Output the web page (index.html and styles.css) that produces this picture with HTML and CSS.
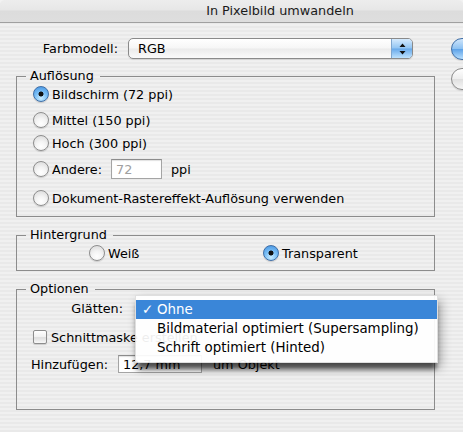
FILE: index.html
```html
<!DOCTYPE html>
<html lang="de">
<head>
<meta charset="utf-8">
<title>In Pixelbild umwandeln</title>
<link rel="stylesheet" href="styles.css">
</head>
<body>
<div class="window">
  <div class="titlebar">In Pixelbild umwandeln</div>
  <div class="content">
    <div class="main">
      <div class="farb-row">
        <span class="farb-label">Farbmodell:</span>
        <div class="popup">
          <span class="popup-value">RGB</span>
          <span class="popup-arrows">
            <svg width="7" height="12" viewBox="0 0 7 12"><path d="M3.5 0.5 L6.5 4 L0.5 4 Z M3.5 11.5 L6.5 8 L0.5 8 Z" fill="#111"/></svg>
          </span>
        </div>
      </div>

      <fieldset class="group group-aufl">
        <legend>Auflösung</legend>
        <div class="opt mt1"><span class="radio on"></span><span>Bildschirm (72 ppi)</span></div>
        <div class="opt mt6"><span class="radio"></span><span>Mittel (150 ppi)</span></div>
        <div class="opt mt3"><span class="radio"></span><span>Hoch (300 ppi)</span></div>
        <div class="opt mt6">
          <span class="radio"></span><span class="andere-label">Andere:</span>
          <span class="field field-ppi">72</span><span class="ppi">ppi</span>
        </div>
        <div class="opt mt9"><span class="radio"></span><span>Dokument-Rastereffekt-Auflösung verwenden</span></div>
      </fieldset>

      <fieldset class="group group-hint">
        <legend>Hintergrund</legend>
        <div class="hint-row">
          <div class="opt"><span class="radio"></span><span>Weiß</span></div>
          <div class="opt"><span class="radio on"></span><span>Transparent</span></div>
        </div>
      </fieldset>

      <fieldset class="group group-opt">
        <legend>Optionen</legend>
        <div class="glatt-row">
          <span class="glatt-label">Glätten:</span>
          <div class="menu-anchor">
            <ul class="menu">
              <li class="menu-item selected"><span class="check">✓</span>Ohne</li>
              <li class="menu-item">Bildmaterial optimiert (Supersampling)</li>
              <li class="menu-item">Schrift optimiert (Hinted)</li>
            </ul>
          </div>
        </div>
        <div class="check-row"><span class="checkbox"></span><span>Schnittmaske erstellen</span></div>
        <div class="add-row">
          <span class="add-label">Hinzufügen:</span>
          <span class="field field-mm">12,7 mm</span>
          <span class="um">um Objekt</span>
        </div>
      </fieldset>
    </div>
    <div class="side">
      <div class="btn btn-default"></div>
      <div class="btn"></div>
    </div>
  </div>
</div>
</body>
</html>
```
FILE: styles.css
```css
* { box-sizing: border-box; }
html, body { margin: 0; padding: 0; }
body {
  width: 463px;
  height: 432px;
  overflow: hidden;
  background: #f2f2f2;
  font-family: "DejaVu Sans", "Liberation Sans", sans-serif;
  font-size: 12.8px;
  color: #000;
}
.window {
  width: 463px;
  height: 432px;
  border-radius: 5px 5px 0 0;
  overflow: hidden;
  background: repeating-linear-gradient(to bottom, #f0f0f0 0 2px, #e9e9e9 2px 4px);
}
.titlebar {
  height: 23px;
  line-height: 22px;
  padding-left: 97px;
  text-align: center;
  color: #1a1a1a;
  background: linear-gradient(#ededed 0, #e7e7e7 45%, #dcdcdc 50%, #dedede 100%);
  border-bottom: 1px solid #a0a0a0;
}
.content {
  display: flex;
  gap: 16px;
  padding: 15px 0 0 16px;
}
.main {
  flex: none;
  width: 419px;
  display: flex;
  flex-direction: column;
}
.side {
  flex: 1;
  min-width: 0;
  overflow: hidden;
  display: flex;
  flex-direction: column;
  gap: 8px;
}
.btn {
  flex: none;
  width: 90px;
  height: 22px;
  border-radius: 11px;
  border: 1px solid #8a8a8a;
  background: linear-gradient(#fefefe, #eeeeee 48%, #e0e0e0 52%, #f6f6f6);
  box-shadow: 0 1px 1px rgba(0,0,0,0.12);
}
.btn-default {
  border-color: #3f6ea6;
  background: linear-gradient(#cfe5fb, #8ec2f2 48%, #5fa3e8 52%, #b7defd);
}

/* Farbmodell */
.farb-row {
  display: flex;
  align-items: center;
  gap: 10px;
  height: 21px;
}
.farb-label {
  width: 102px;
  text-align: right;
}
.popup {
  display: flex;
  align-items: stretch;
  width: 285px;
  height: 21px;
  border: 1px solid #8a8a8a;
  border-radius: 5px;
  overflow: hidden;
  background: linear-gradient(#ffffff, #f6f6f6 48%, #ebebeb 52%, #fafafa);
  box-shadow: 0 1px 1px rgba(0,0,0,0.1);
}
.popup-value {
  flex: 1;
  padding-left: 9px;
  line-height: 19px;
}
.popup-arrows {
  width: 21px;
  display: flex;
  align-items: center;
  justify-content: center;
  border-left: 1px solid #7fa6cf;
  background: linear-gradient(#d5eafd, #92c5f3 48%, #68a9ea 52%, #bde2fe);
}

/* Groups */
.group {
  margin: 10px 0 0 0;
  padding: 0 0 8px 0;
  border: 1px solid #8c8c8c;
  min-width: 0;
}
.group legend {
  margin-left: 9px;
  padding: 0 6px 0 4px;
  line-height: 14px;
}
.group-hint, .group-opt { margin-top: 11px; }
.group-hint { padding-bottom: 7px; }
.group-opt { padding-bottom: 35px; }

.opt {
  display: flex;
  align-items: center;
  gap: 3px;
  height: 20px;
  padding-left: 16px;
}
.mt1 { margin-top: 1px; }
.mt3 { margin-top: 3px; }
.mt6 { margin-top: 6px; }
.mt9 { margin-top: 9px; }

.radio {
  flex: none;
  width: 16px;
  height: 16px;
  border-radius: 50%;
  border: 1px solid #8d8d8d;
  background: radial-gradient(circle at 50% 75%, #ffffff 0, #f4f4f4 40%, #d6d6d6 100%);
  box-shadow: 0 1px 1px rgba(0,0,0,0.15);
}
.radio.on {
  border-color: #3f6ea6;
  background:
    radial-gradient(circle at 50% 50%, #111 0 2.2px, transparent 2.8px),
    radial-gradient(circle at 50% 80%, #c9ecff 0, #7cc0f6 45%, #3f8fe0 100%);
}

.andere-label { width: 56px; }
.field {
  display: inline-flex;
  align-items: center;
  background: #fff;
  border: 1px solid #a4a4a4;
  border-top-color: #8c8c8c;
  box-shadow: inset 0 1px 1px rgba(0,0,0,0.12);
}
.field-ppi {
  width: 51px;
  height: 20px;
  padding-left: 4px;
  color: #a0a0a0;
}
.ppi { margin-left: 6px; }

.hint-row {
  display: grid;
  grid-template-columns: 174px auto;
  margin-top: 1px;
  padding-left: 56px;
}

/* Optionen */
.glatt-row {
  display: flex;
  align-items: center;
  height: 21px;
  margin-top: 2px;
}
.glatt-label {
  width: 106px;
  text-align: right;
}
.menu-anchor {
  position: relative;
  margin-left: 12px;
  width: 1px;
  height: 21px;
}
.menu {
  position: absolute;
  z-index: 5;
  top: -3px;
  left: 0;
  width: 303px;
  margin: 0;
  padding: 4px 0 5px 0;
  list-style: none;
  font-size: 13.4px;
  background: rgba(255,255,255,0.93);
  border: 1px solid rgba(0,0,0,0.12);
  box-shadow: 0 8px 5px -2px rgba(0,0,0,0.6), 3px 5px 10px rgba(0,0,0,0.3);
}
.menu-item {
  height: 19px;
  line-height: 19px;
  padding-left: 21px;
  white-space: nowrap;
  position: relative;
}
.menu-item.selected {
  background: #3a86d8;
  color: #fff;
}
.check {
  position: absolute;
  left: 6px;
  top: 0;
  font-weight: bold;
}

.check-row {
  display: flex;
  align-items: center;
  gap: 4px;
  height: 20px;
  margin-top: 8px;
  padding-left: 16px;
}
.checkbox {
  flex: none;
  width: 14px;
  height: 14px;
  border-radius: 2px;
  border: 1px solid #8d8d8d;
  background: linear-gradient(#ffffff, #f1f1f1 50%, #dedede 55%, #f8f8f8);
  box-shadow: 0 1px 1px rgba(0,0,0,0.15);
}

.add-row {
  display: flex;
  align-items: center;
  height: 20px;
  margin-top: 7px;
  padding-left: 14px;
}
.add-label { width: 87px; }
.field-mm {
  width: 84px;
  height: 18px;
  padding-left: 4px;
}
.um { margin-left: 11px; }
```
